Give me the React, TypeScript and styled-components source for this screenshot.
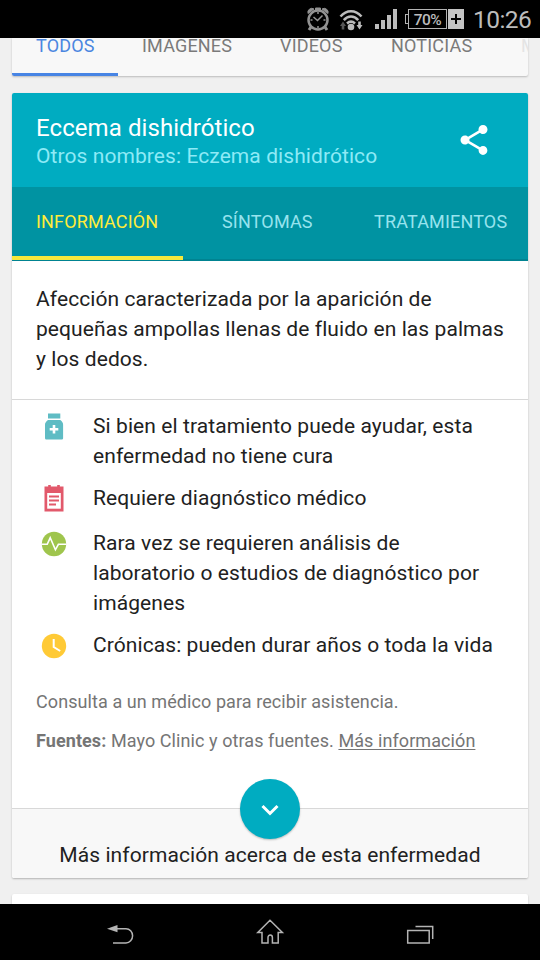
import React from 'react';
import styled, { createGlobalStyle } from 'styled-components';

const GlobalStyle = createGlobalStyle`
  * { box-sizing: border-box; }
  body {
    margin: 0;
    background: #f0f0f0;
    font-family: Roboto, sans-serif;
    font-variant-ligatures: none;
    letter-spacing: 0.08px;
  }
`;

const Screen = styled.div`
  width: 540px;
  height: 960px;
  display: flex;
  flex-direction: column;
  overflow: hidden;
  background: #f0f0f0;
`;

const StatusBar = styled.header`
  height: 38px;
  flex: none;
  background: #000;
  display: flex;
  align-items: center;
  justify-content: flex-end;
  padding-right: 10px;
  color: #bcbcbc;
`;

const StatusIcon = styled.svg<{ $gap: number }>`
  display: block;
  flex: none;
  margin-right: ${(p) => p.$gap}px;
`;

const Battery = styled.div`
  display: flex;
  align-items: center;
  height: 20px;
  margin: 0 9px 0 0;
`;

const BatteryTip = styled.span`
  width: 3px;
  height: 10px;
  border: 1px solid #b4b4b4;
  border-right: 0;
`;

const BatteryLevel = styled.span`
  width: 39px;
  height: 20px;
  border: 1px solid #b4b4b4;
  font-size: 15.5px;
  font-weight: 500;
  line-height: 20px;
  text-align: center;
  letter-spacing: -0.5px;
`;

const BatteryPlus = styled.svg`
  display: block;
  margin-left: 1px;
`;

const Clock = styled.span`
  width: 57px;
  font-size: 24.5px;
  line-height: 36px;
  padding-top: 2px;
  white-space: nowrap;
  letter-spacing: -0.55px;
`;

const Content = styled.main`
  flex: 1;
  min-height: 0;
  overflow: hidden;
  padding: 0 12px;
  display: flex;
  flex-direction: column;
`;

const SearchTabs = styled.nav`
  flex: none;
  height: 38px;
  margin-bottom: 17px;
  background: #f8f8f8;
  border-radius: 0 0 2px 2px;
  box-shadow: 0 1px 2px rgba(0, 0, 0, 0.22);
  display: flex;
  overflow: hidden;
`;

const SearchTab = styled.a<{ $active?: boolean; $faded?: boolean; $width: number }>`
  flex: none;
  width: ${(p) => p.$width}px;
  height: 38px;
  padding-left: 24px;
  font-size: 18px;
  line-height: 15px;
  letter-spacing: 0.18px;
  white-space: nowrap;
  color: ${(p) => (p.$active ? '#4a86e0' : p.$faded ? '#e4e4e4' : '#7a7a7a')};
  border-bottom: ${(p) => (p.$active ? '3px solid #4784e4' : '0')};
`;

const Card = styled.article`
  flex: none;
  height: 785px;
  margin-bottom: 16px;
  background: #fff;
  border-radius: 2px;
  box-shadow: 0 1px 2px rgba(0, 0, 0, 0.25);
  display: flex;
  flex-direction: column;
`;

const CardHeader = styled.header`
  height: 94px;
  background: #00acc1;
  border-radius: 2px 2px 0 0;
  padding: 20px 36px 0 24px;
  display: flex;
  justify-content: space-between;
`;

const Title = styled.h1`
  margin: 0;
  font-size: 24px;
  font-weight: 400;
  line-height: 30px;
  color: #fff;
`;

const Subtitle = styled.p`
  margin: 0;
  font-size: 21px;
  line-height: 26px;
  color: #8eeaf6;
`;

const ShareIcon = styled.svg`
  display: block;
  margin-top: 9px;
`;

const InfoTabs = styled.nav`
  height: 74px;
  background: #0093a2;
  border-bottom: 2px solid #008391;
  display: flex;
`;

const InfoTab = styled.a<{ $active?: boolean; $width: number; $pad: number }>`
  width: ${(p) => p.$width}px;
  height: 73px;
  padding-left: ${(p) => p.$pad}px;
  font-size: 18px;
  line-height: 70px;
  letter-spacing: 0.17px;
  white-space: nowrap;
  color: ${(p) => (p.$active ? '#ffeb3b' : '#97e3ee')};
  border-bottom: ${(p) => (p.$active ? '4px solid #f6e83c' : '0')};
`;

const Summary = styled.p`
  margin: 0;
  height: 139px;
  padding: 23px 20px 0 24px;
  font-size: 21px;
  line-height: 30px;
  color: #212121;
  white-space: nowrap;
  border-bottom: 1px solid #d8d8d8;
`;

const Facts = styled.ul`
  list-style: none;
  margin: 0;
  padding: 11px 24px 0 24px;
`;

const Fact = styled.li<{ $gap: number }>`
  display: flex;
  margin-bottom: ${(p) => p.$gap}px;
  font-size: 21px;
  line-height: 30px;
  color: #212121;
  white-space: nowrap;
`;

const FactIcon = styled.svg`
  flex: none;
  display: block;
  margin: 0 21px 0 0;
`;

const Notes = styled.section`
  flex: 1;
  padding: 27px 24px 0;
  font-size: 18px;
  line-height: 30px;
  color: #757575;
`;

const Note = styled.p`
  margin: 0 0 9px;
`;

const NoteLink = styled.a`
  color: inherit;
  text-decoration: underline;
  text-decoration-thickness: 1px;
  text-underline-offset: 2px;
`;

const MoreFooter = styled.footer`
  flex: none;
  height: 70px;
  border-top: 1px solid #d8d8d8;
  background: #f8f8f8;
  border-radius: 0 0 2px 2px;
  display: flex;
  flex-direction: column;
  align-items: center;
`;

const ExpandButton = styled.button`
  flex: none;
  width: 60px;
  height: 60px;
  margin-top: -30px;
  padding: 0;
  border: 0;
  border-radius: 50%;
  background: #00acc1;
  box-shadow: 0 1px 2px rgba(0, 0, 0, 0.25);
`;

const ChevronIcon = styled.svg`
  display: block;
`;

const MoreLabel = styled.span`
  margin-top: 1px;
  font-size: 21px;
  line-height: 30px;
  color: #212121;
  white-space: nowrap;
`;

const NextCard = styled.div`
  flex: none;
  height: 40px;
  background: #fff;
  border-radius: 2px;
  box-shadow: 0 1px 2px rgba(0, 0, 0, 0.22);
`;

const NavBar = styled.footer`
  flex: none;
  height: 56px;
  background: #000;
  display: flex;
  justify-content: center;
  gap: 120px;
`;

const NavIcon = styled.svg`
  display: block;
  width: 30px;
  height: 56px;
`;

const searchTabs = [
  { label: 'TODOS', width: 106, active: true },
  { label: 'IMAGENES', width: 138 },
  { label: 'VIDEOS', width: 111 },
  { label: 'NOTICIAS', width: 130 },
  { label: 'MAPS', width: 100, faded: true },
];

const MedicineIcon = () => (
  <FactIcon width="36" height="30" viewBox="0 0 36 30" fill="#5fbcc4">
    <rect x="12" y="2.5" width="12.3" height="5" />
    <path d="M12 9h12.3c1.8 1.5 2.8 2.7 2.8 4.5v13.4c0 .9-.7 1.6-1.6 1.6H10.6c-.9 0-1.6-.7-1.6-1.6V13.5C9 11.700 10.2 10.5 12 9z" />
    <path d="M16.700 14h2.600v3h3v2.600h-3v3h-2.600v-3h-3v-2.600h3z" fill="#fff" />
  </FactIcon>
);

const ClipboardIcon = () => (
  <FactIcon width="36" height="30" viewBox="0 0 36 30">
    <path d="M8.500 3.500h3.700V2h2.600v1.500h6.400V2h2.600v1.500H27.500V28.500h-19z" fill="#e2596b" />
    <path d="M11.200 10h13.600v15.700H11.200z" fill="#fff" />
    <path d="M13 13.500h10M13 17.500h10M13 21.500h7" stroke="#e2596b" strokeWidth="2" />
  </FactIcon>
);

const PulseIcon = () => (
  <FactIcon width="36" height="30" viewBox="0 0 36 30" fill="none">
    <circle cx="18" cy="16" r="12.2" fill="#9fc54d" />
    <path d="M5.500 16.300H11.200l3-6.500 5.200 12 3-5.500H30.500" stroke="#fff" strokeWidth="1.600" />
  </FactIcon>
);

const DurationIcon = () => (
  <FactIcon width="36" height="30" viewBox="0 0 36 30" fill="none">
    <circle cx="18" cy="16" r="12.2" fill="#ffca36" />
    <path d="M17.700 9v8l6.500 4" stroke="#fff" strokeWidth="2" />
  </FactIcon>
);

const facts = [
  { icon: <MedicineIcon />, lines: ['Si bien el tratamiento puede ayudar, esta', 'enfermedad no tiene cura'], gap: 12 },
  { icon: <ClipboardIcon />, lines: ['Requiere diagnóstico médico'], gap: 15 },
  {
    icon: <PulseIcon />,
    lines: ['Rara vez se requieren análisis de', 'laboratorio o estudios de diagnóstico por', 'imágenes'],
    gap: 12,
  },
  { icon: <DurationIcon />, lines: ['Crónicas: pueden durar años o toda la vida'], gap: 0 },
];

const Lines = ({ items }: { items: string[] }) => (
  <span>
    {items.map((line, i) => (
      <React.Fragment key={line}>
        {i > 0 && <br />}
        {line}
      </React.Fragment>
    ))}
  </span>
);

export default function App() {
  return (
    <Screen>
      <GlobalStyle />
      <StatusBar>
        <StatusIcon $gap={9} width="24" height="26" viewBox="0 0 24 26" fill="none" stroke="#929292">
          <circle cx="12" cy="14" r="9.5" strokeWidth="2.5" />
          <path d="M2 7.500a4 4 0 0 1 6-4.500zM22 7.500a4 4 0 0 0-6-4.500zM9.500 2h5v2.500h-5z" fill="#929292" strokeWidth="1" />
          <path d="M5 21l-2 3M19 21l2 3" strokeWidth="3" />
          <path d="M7.500 11l4 3.500 5-5M12 6v2M12 20v2M4.500 14h2M17.500 14h2" strokeWidth="1.500" />
        </StatusIcon>
        <StatusIcon $gap={12} width="24" height="26" viewBox="0 0 24 26" fill="none" stroke="#bcbcbc">
          <path d="M1.500 10.500C7.500 3.500 16.500 3.500 22.500 10.500M4.800 14.200c4.300-4.800 10.100-4.800 14.400 0M8 17.500c2.500-2.300 5.500-2.300 8 0" strokeWidth="2.500" />
          <circle cx="12" cy="21" r="3.3" fill="#bcbcbc" stroke="none" />
          <path d="M4 15.500l3 4.500H5.300v3.500H2.700V20H1z" fill="#555" stroke="none" />
          <path d="M20.500 23.500l3-4.500h-1.700v-3.500h-2.600V19h-1.700z" fill="#bcbcbc" stroke="none" />
        </StatusIcon>
        <StatusIcon $gap={8} width="22" height="20" viewBox="0 0 22 20" fill="#bcbcbc">
          <path d="M0 15h4v5H0zM6 11h4v9H6zM12 6h4v14h-4zM18 0h4v20h-4z" />
        </StatusIcon>
        <Battery>
          <BatteryTip />
          <BatteryLevel>70%</BatteryLevel>
          <BatteryPlus width="16" height="20" viewBox="0 0 16 20">
            <path d="M0 0h16v20H0z" fill="#c4c4c4" />
            <path d="M8 5v10M3 10h10" stroke="#000" strokeWidth="2" />
          </BatteryPlus>
        </Battery>
        <Clock>10:26</Clock>
      </StatusBar>

      <Content>
        <SearchTabs>
          {searchTabs.map((t) => (
            <SearchTab key={t.label} $width={t.width} $active={t.active} $faded={t.faded}>
              {t.label}
            </SearchTab>
          ))}
        </SearchTabs>

        <Card>
          <CardHeader>
            <div>
              <Title>Eccema dishidrótico</Title>
              <Subtitle>Otros nombres: Eczema dishidrótico</Subtitle>
            </div>
            <ShareIcon width="36" height="36" viewBox="0 0 24 24" fill="#fff">
              <path d="M18 16.080c-.76 0-1.440.3-1.960.77L8.910 12.700c.05-.23.090-.46.090-.7s-.04-.47-.09-.7l7.050-4.110c.54.5 1.250.81 2.040.81 1.660 0 3-1.340 3-3s-1.340-3-3-3-3 1.340-3 3c0 .24.04.47.09.7L8.040 9.810C7.500 9.310 6.790 9 6 9c-1.660 0-3 1.340-3 3s1.340 3 3 3c.79 0 1.500-.31 2.040-.81l7.120 4.160c-.05.21-.08.43-.08.65 0 1.610 1.310 2.920 2.920 2.920s2.920-1.310 2.920-2.920-1.310-2.920-2.920-2.920z" />
            </ShareIcon>
          </CardHeader>
          <InfoTabs>
            <InfoTab $width={171} $pad={24} $active>INFORMACIÓN</InfoTab>
            <InfoTab $width={167} $pad={39}>SÍNTOMAS</InfoTab>
            <InfoTab $width={178} $pad={24}>TRATAMIENTOS</InfoTab>
          </InfoTabs>
          <Summary>
            <Lines
              items={[
                'Afección caracterizada por la aparición de',
                'pequeñas ampollas llenas de fluido en las palmas',
                'y los dedos.',
              ]}
            />
          </Summary>
          <Facts>
            {facts.map((f) => (
              <Fact key={f.lines[0]} $gap={f.gap}>
                {f.icon}
                <Lines items={f.lines} />
              </Fact>
            ))}
          </Facts>
          <Notes>
            <Note>Consulta a un médico para recibir asistencia.</Note>
            <Note>
              <b>Fuentes:</b> Mayo Clinic y otras fuentes. <NoteLink>Más información</NoteLink>
            </Note>
          </Notes>
          <MoreFooter>
            <ExpandButton aria-label="Expandir">
              <ChevronIcon width="60" height="60" viewBox="0 0 60 60" fill="none">
                <path d="M22.500 27l7.500 7.500 7.500-7.500" stroke="#fff" strokeWidth="3" />
              </ChevronIcon>
            </ExpandButton>
            <MoreLabel>Más información acerca de esta enfermedad</MoreLabel>
          </MoreFooter>
        </Card>

        <NextCard />
      </Content>

      <NavBar>
        <NavIcon viewBox="0 0 30 56" fill="none" stroke="#b4b4b4" strokeWidth="1.5">
          <path d="M11 24.700h10a6.500 7 0 0 1 0 14.200H8" />
          <path d="M2 24.700l10.500-3.700v7.200z" fill="#b4b4b4" stroke="none" />
        </NavIcon>
        <NavIcon viewBox="0 0 30 56" fill="none" stroke="#b4b4b4" strokeWidth="1.5">
          <path d="M15 16.200L2.800 28.500H7V39h6v-5.500a2.200 2.500 0 0 1 4.400 0V39h5.800V28.500h4.200z" />
        </NavIcon>
        <NavIcon viewBox="0 0 30 56" fill="none" stroke="#b4b4b4" strokeWidth="1.5">
          <path d="M2.700 26.500h21.500V39H2.700zM10.500 22.500h17.200V35" />
        </NavIcon>
      </NavBar>
    </Screen>
  );
}
